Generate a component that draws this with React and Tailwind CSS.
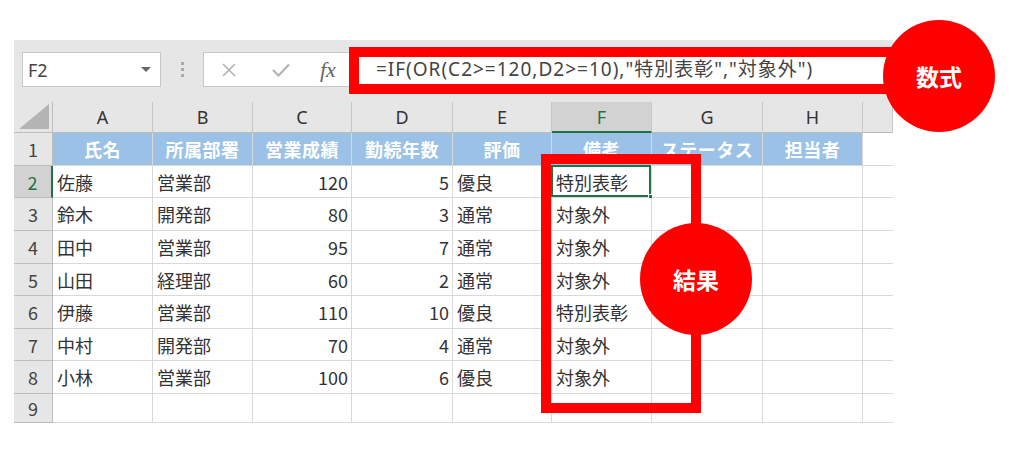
import React from "react";

const cols = ["A", "B", "C", "D", "E", "F", "G", "H", ""];
const heads = ["氏名", "所属部署", "営業成績", "勤続年数", "評価", "備考", "ステータス", "担当者", ""];
const rows = [
  ["佐藤", "営業部", "120", "5", "優良", "特別表彰"],
  ["鈴木", "開発部", "80", "3", "通常", "対象外"],
  ["田中", "営業部", "95", "7", "通常", "対象外"],
  ["山田", "経理部", "60", "2", "通常", "対象外"],
  ["伊藤", "営業部", "110", "10", "優良", "特別表彰"],
  ["中村", "開発部", "70", "4", "通常", "対象外"],
  ["小林", "営業部", "100", "6", "優良", "対象外"],
];
const heights = ["h-[32px]", "h-[33px]", "h-[33px]", "h-[32px]", "h-[33px]", "h-[32px]", "h-[33px]", "h-[29px]"];
const numCols = [2, 3];

function Cell({ children, align = "left", selected }) {
  return (
    <div
      className={
        "relative flex items-center border-r border-b border-[#d9d9d9] bg-white text-[18px] text-[#333] " +
        (align === "right" ? "justify-end pr-[3px]" : "justify-start pl-[4px]")
      }
    >
      {children}
      {selected && (
        <>
          <div className="absolute -left-[1px] -top-[1px] right-0 bottom-0 border-2 border-[#217346]" />
          <div className="absolute -right-[3px] -bottom-[3px] w-[6px] h-[6px] bg-[#217346] border border-white" />
        </>
      )}
    </div>
  );
}

export default function App() {
  return (
    <div className="relative w-[1024px] h-[462px] overflow-hidden bg-white pt-[40px] pl-[14px] font-['Noto_Sans_CJK_JP','Liberation_Sans',sans-serif] leading-none">
      <div className="w-[879px] bg-[#e6e6e6]">
        {/* formula bar */}
        <div className="flex items-start h-[62px] pt-[12px] pl-[8px]">
          <div className="flex items-center justify-between w-[139px] h-[35px] bg-white border border-[#c8c8c8] pl-[5px] pr-[9px]">
            <span className="text-[18px] text-[#444] font-['Noto_Sans','Liberation_Sans',sans-serif]">F2</span>
            <span className="w-0 h-0 border-l-[5px] border-r-[5px] border-t-[5px] border-l-transparent border-r-transparent border-t-[#666]" />
          </div>
          <div className="flex flex-col items-center justify-center gap-[3px] w-[42px] h-[35px]">
            <span className="w-[3px] h-[3px] bg-[#aaa]" />
            <span className="w-[3px] h-[3px] bg-[#aaa]" />
            <span className="w-[3px] h-[3px] bg-[#aaa]" />
          </div>
          <div className="flex items-center flex-1 h-[35px] bg-white border border-[#c8c8c8]">
            <svg width="16" height="16" viewBox="0 0 16 16" className="ml-[17px]">
              <path d="M2 2 L14 14 M14 2 L2 14" stroke="#b4b4b4" strokeWidth="1.6" fill="none" />
            </svg>
            <svg width="18" height="14" viewBox="0 0 18 14" className="ml-[35px]">
              <path d="M1 7 L6.5 12.5 L17 1.5" stroke="#b4b4b4" strokeWidth="2.2" fill="none" />
            </svg>
            <span className="ml-[30px] text-[22px] italic text-[#666] font-['Liberation_Serif',serif]">fx</span>
            <span className="ml-[40px] text-[19px] tracking-[1px] text-[#444] whitespace-nowrap font-['Noto_Sans','Noto_Sans_CJK_JP',sans-serif]">
              =IF(OR(C2&gt;=120,D2&gt;=10),"特別表彰","対象外")
            </span>
          </div>
        </div>

        {/* sheet */}
        <div className="grid grid-cols-[39px_100px_100px_99px_101px_99px_100px_111px_100px_30px]">
          {/* column headers */}
          <div className="relative h-[31px] border-r border-b border-[#bdbdbd] bg-[#e6e6e6]">
            <svg width="30" height="25" viewBox="0 0 30 25" className="absolute right-[3px] bottom-[3px]">
              <path d="M30 0 L30 25 L0 25 Z" fill="#b4b4b4" />
            </svg>
          </div>
          {cols.map((c, i) => (
            <div
              key={"c" + i}
              className={
                "flex items-center justify-center h-[31px] border-r border-[#c8c8c8] text-[18px] font-['Noto_Sans','Liberation_Sans',sans-serif] " +
                (c === "F"
                  ? "bg-[#d2d2d2] text-[#217346] border-b-2 border-b-[#217346]"
                  : "bg-[#e6e6e6] text-[#333] border-b border-b-[#bdbdbd]")
              }
            >
              {c}
            </div>
          ))}

          {/* header row 1 */}
          <div className="flex items-center justify-center h-[33px] border-r border-b border-[#bdbdbd] bg-[#e6e6e6] text-[18px] text-[#444]">1</div>
          {heads.map((h, i) =>
            i < 8 ? (
              <div key={"h" + i} className="flex items-center justify-center border-r border-b border-[#d9d9d9] bg-[#9bc2e6] text-[18px] font-bold tracking-[0.5px] text-white">
                {h}
              </div>
            ) : (
              <div key={"h" + i} className="border-b border-[#d9d9d9] bg-white" />
            )
          )}

          {/* data rows */}
          {[...rows, ["", "", "", "", "", ""]].map((r, ri) => (
            <React.Fragment key={"r" + ri}>
              <div
                className={
                  "flex items-center justify-center border-b border-[#bdbdbd] text-[18px] " +
                  heights[ri] +
                  (ri === 0
                    ? " bg-[#d2d2d2] text-[#217346] border-r-2 border-r-[#217346]"
                    : " bg-[#e6e6e6] text-[#444] border-r border-r-[#bdbdbd]")
                }
              >
                {ri + 2}
              </div>
              {r.map((v, ci) => (
                <Cell key={ci} align={numCols.includes(ci) ? "right" : "left"} selected={ri === 0 && ci === 5}>
                  {v}
                </Cell>
              ))}
              <Cell />
              <Cell />
              <div className="border-b border-[#d9d9d9] bg-white" />
            </React.Fragment>
          ))}
        </div>
      </div>

      {/* annotations */}
      <div className="absolute left-[349px] top-[47px] w-[580px] h-[47px] border-[10px] border-[#ff0000]" />
      <div className="absolute left-[541px] top-[154px] w-[160px] h-[259px] border-[10px] border-[#ff0000]" />
      <div className="absolute left-[883px] top-[20px] w-[112px] h-[112px] rounded-full bg-[#ff0000] flex items-center justify-center text-white text-[23px] font-bold">
        数式
      </div>
      <div className="absolute left-[640px] top-[223px] w-[112px] h-[112px] rounded-full bg-[#ff0000] flex items-center justify-center text-white text-[23px] font-bold">
        結果
      </div>
    </div>
  );
}
